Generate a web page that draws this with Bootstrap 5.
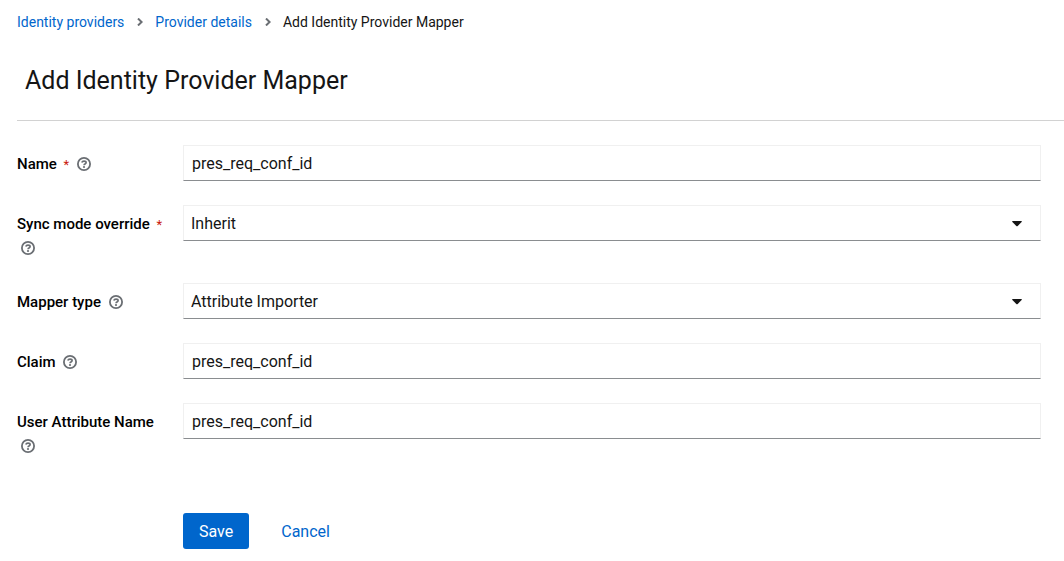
<!DOCTYPE html>
<html lang="en">
<head>
<meta charset="utf-8">
<meta name="viewport" content="width=device-width, initial-scale=1">
<title>Add Identity Provider Mapper</title>
<link rel="stylesheet" href="https://cdn.jsdelivr.net/npm/bootstrap@5.3.0/dist/css/bootstrap.min.css">
<style>
body { font-family: Roboto, "Open Sans", sans-serif; font-size: 14px; line-height: 24px; color: #151515; }
.page { padding: 10px 0 12px 17px; }
.breadcrumb { --bs-breadcrumb-margin-bottom: 0; }
.breadcrumb a, .actions .btn-link { color: #06c; text-decoration: none; }
.crumb-sep { width: 6px; height: 8px; margin: 0 12px 0 13px; fill: none; stroke: #6a6e73; stroke-width: 2; }
.page-title { font-size: 25px; line-height: 32px; font-weight: 400; padding: 31px 8px 23px; margin: 0; border-bottom: 1px solid #d2d2d2; }
.mapper-form { display: grid; gap: 24px; padding: 24px 23px 0 0; }
.field { display: grid; grid-template-columns: 150px minmax(0, 1fr); column-gap: 16px; align-items: start; }
.field-label { padding-top: 7px; margin-bottom: -1px; font-size: 15px; font-weight: 500; color: #000; }
.field-label label { white-space: nowrap; }
.required { color: #c9190b; font-size: 13px; line-height: 1; font-weight: 400; margin-left: 3px; }
.help { border: 0; padding: 0 4px; background: none; color: #6a6e73; line-height: 24px; vertical-align: top; }
.help svg { display: block; width: 14px; height: 24px; }
.form-control, .form-select { height: 36px; font-size: 16px; line-height: 24px; padding: 5px 8px; color: #151515; border: 1px solid #f0f0f0; border-bottom-color: #8a8d90; border-radius: 0; }
.form-select { padding: 6px 36px 4px 7px; background-image: url("data:image/svg+xml,%3Csvg xmlns='http://www.w3.org/2000/svg' viewBox='0 0 10 6'%3E%3Cpath d='M.8 0h8.4q1.2 0 .4 1L5.7 5q-.7.7-1.4 0L.4 1q-.8-1 .4-1z' fill='%23151515'/%3E%3C/svg%3E"); background-size: 10px 6px; background-position: right 18px top 15px; }
.actions { padding: 32px 0 0 166px; gap: 16px; }
.actions .btn { font-size: 16px; line-height: 24px; padding: 7px 16px 5px; border: 0; border-radius: 3px; }
.btn-primary { --bs-btn-bg: #06c; --bs-btn-hover-bg: #004080; }
</style>
</head>
<body>
<svg class="d-none">
  <symbol id="question" viewBox="0 0 14 24">
    <circle cx="7" cy="12" r="6.1" fill="none" stroke="currentColor" stroke-width="1.8"/>
    <path d="M4.8 10.6Q5.3 9.1 7 9.1q2.1 0 2.1 1.5 0 .9-1.1 1.5-.9.5-.9 1.1" fill="none" stroke="currentColor" stroke-width="1.7"/>
    <circle cx="7" cy="15" r="1.1" fill="currentColor"/>
  </symbol>
  <symbol id="chevron" viewBox="0 0 6 8"><path d="M1 .5 4.6 4 1 7.5"/></symbol>
</svg>
<main class="page">
  <nav aria-label="Breadcrumb">
    <ol class="breadcrumb align-items-center">
      <li><a href="#">Identity providers</a></li>
      <li class="d-flex align-items-center"><svg class="crumb-sep" aria-hidden="true"><use href="#chevron"/></svg><a href="#">Provider details</a></li>
      <li class="d-flex align-items-center"><svg class="crumb-sep" aria-hidden="true"><use href="#chevron"/></svg><span aria-current="page">Add Identity Provider Mapper</span></li>
    </ol>
  </nav>
  <h1 class="page-title">Add Identity Provider Mapper</h1>
  <form class="mapper-form">
    <div class="field">
      <div class="field-label"><label for="name">Name <span class="required" aria-hidden="true">*</span></label> <button type="button" class="help" aria-label="Help for name"><svg><use href="#question"/></svg></button></div>
      <input class="form-control" id="name" type="text" value="pres_req_conf_id" required>
    </div>
    <div class="field">
      <div class="field-label"><label for="sync">Sync mode override <span class="required" aria-hidden="true">*</span></label> <button type="button" class="help" aria-label="Help for sync mode override"><svg><use href="#question"/></svg></button></div>
      <select class="form-select" id="sync" required><option>Inherit</option></select>
    </div>
    <div class="field">
      <div class="field-label"><label for="type">Mapper type</label> <button type="button" class="help" aria-label="Help for mapper type"><svg><use href="#question"/></svg></button></div>
      <select class="form-select" id="type"><option>Attribute Importer</option></select>
    </div>
    <div class="field">
      <div class="field-label"><label for="claim">Claim</label> <button type="button" class="help" aria-label="Help for claim"><svg><use href="#question"/></svg></button></div>
      <input class="form-control" id="claim" type="text" value="pres_req_conf_id">
    </div>
    <div class="field">
      <div class="field-label"><label for="attribute">User Attribute Name</label> <button type="button" class="help" aria-label="Help for user attribute name"><svg><use href="#question"/></svg></button></div>
      <input class="form-control" id="attribute" type="text" value="pres_req_conf_id">
    </div>
    <div class="actions d-flex">
      <button type="submit" class="btn btn-primary">Save</button>
      <button type="button" class="btn btn-link">Cancel</button>
    </div>
  </form>
</main>
<script src="https://cdn.jsdelivr.net/npm/bootstrap@5.3.0/dist/js/bootstrap.bundle.min.js"></script>
</body>
</html>
